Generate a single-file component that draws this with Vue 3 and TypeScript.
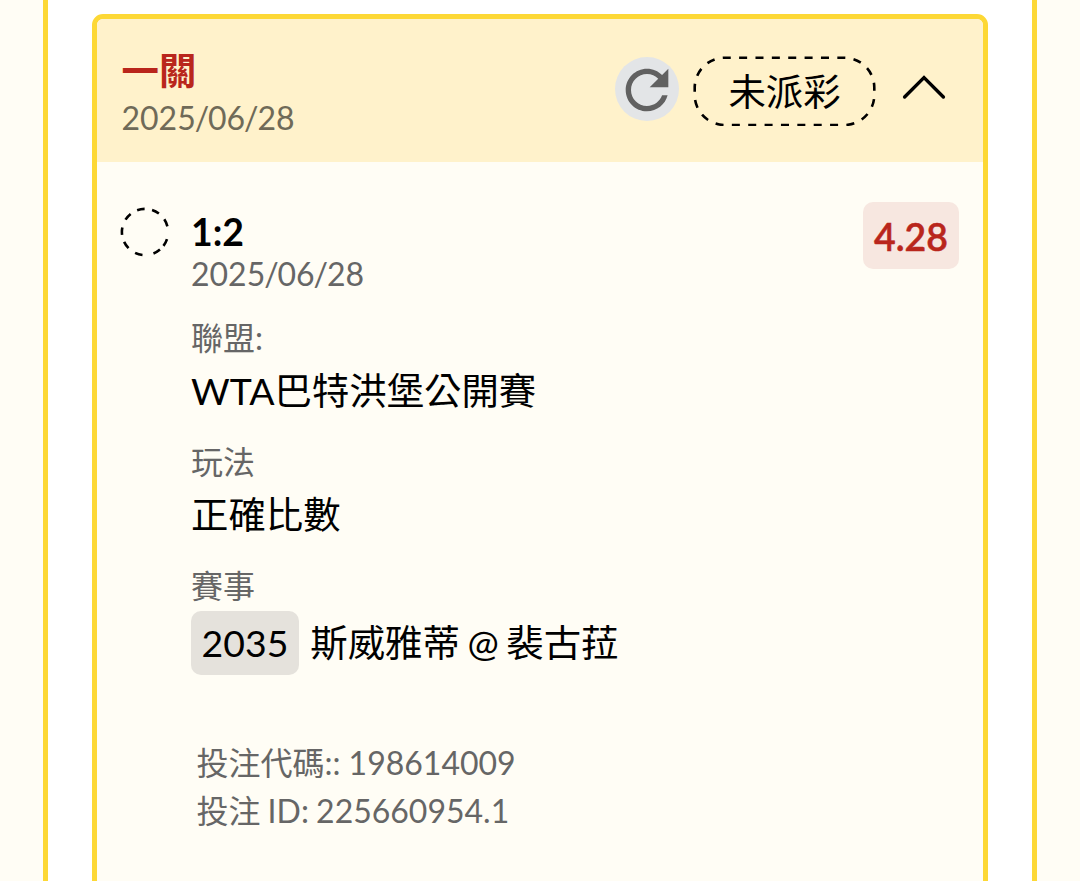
<script setup lang="ts">
interface Detail {
  label: string
  value: string
  code?: string
}

const title = '一關'
const dateParts: string[] = ['2025', '/', '06', '/', '28']
const status = '未派彩'
const pick = '1:2'
const odds = '4.28'

const details: Detail[] = [
  { label: '聯盟:', value: 'WTA巴特洪堡公開賽' },
  { label: '玩法', value: '正確比數' },
  { label: '賽事', value: '斯威雅蒂 @ 裴古菈', code: '2035' },
]

const references: string[] = ['投注代碼:: 198614009', '投注 ID: 225660954.1']
</script>

<template>
  <main class="page">
    <section class="panel">
      <article class="card">
        <header class="head">
          <div class="head-text">
            <h2 class="title">{{ title }}</h2>
            <p class="date">
              <span v-for="(part, i) in dateParts" :key="i" :class="{ slash: part === '/' }">{{ part }}</span>
            </p>
          </div>
          <button class="refresh" type="button">
            <svg viewBox="0 0 24 24" width="64" height="64">
              <path
                d="M17.65 6.35C16.2 4.9 14.21 4 12 4c-4.42 0-7.99 3.58-7.99 8s3.57 8 7.99 8c3.73 0 6.84-2.55 7.73-6h-2.08c-.82 2.33-3.04 4-5.65 4-3.31 0-6-2.69-6-6s2.69-6 6-6c1.66 0 3.14.69 4.22 1.78L13 11h7V4z"
              />
            </svg>
          </button>
          <div class="status">
            <svg class="outline" width="183" height="70" viewBox="0 0 183 70">
              <rect x="1.7" y="1.7" width="179.6" height="67.3" rx="30" pathLength="270" />
            </svg>
            <span>{{ status }}</span>
          </div>
          <svg class="chevron" width="44" height="28" viewBox="0 0 44 28">
            <path d="M2.6 24 22 4.6 41.4 24" />
          </svg>
        </header>

        <div class="body">
          <svg class="pending" width="50" height="50" viewBox="0 0 50 50">
            <circle cx="25" cy="25" r="23.1" pathLength="360" />
          </svg>
          <div class="info">
            <h3 class="pick">{{ pick }}</h3>
            <p class="date">
              <span v-for="(part, i) in dateParts" :key="i" :class="{ slash: part === '/' }">{{ part }}</span>
            </p>
            <dl class="details">
              <div v-for="item in details" :key="item.label" class="detail">
                <dt>{{ item.label }}</dt>
                <dd :class="{ coded: item.code }">
                  <span v-if="item.code" class="code">{{ item.code }}</span>
                  <span>{{ item.value }}</span>
                </dd>
              </div>
            </dl>
            <div class="references">
              <p v-for="line in references" :key="line">{{ line }}</p>
            </div>
          </div>
          <span class="odds">{{ odds }}</span>
        </div>
      </article>
    </section>
  </main>
</template>

<style>
body {
  margin: 0;
  background: #fffdf5;
}
</style>

<style scoped>
.page {
  box-sizing: border-box;
  height: 881px;
  overflow: hidden;
  padding: 0 43px;
  background: #fffdf5;
  color: #000;
  font-family: Lato, "Noto Sans CJK TC", sans-serif;
  font-size: 37.4px;
  line-height: 44px;
}

h2,
h3,
p,
dl,
dd {
  margin: 0;
  font-size: inherit;
}

.panel {
  box-sizing: border-box;
  height: 920px;
  padding: 14px 44px 0;
  background: #fff;
  border: solid #fdd835;
  border-width: 0 5px;
}

.card {
  box-sizing: border-box;
  height: 920px;
  overflow: hidden;
  border: 5px solid #fdd835;
  border-radius: 11px;
  background: #fffdf5;
}

.head {
  box-sizing: border-box;
  display: flex;
  align-items: flex-start;
  height: 143px;
  padding: 30px 37px 0 24.5px;
  background: #fff2cb;
}

.head-text {
  flex: 1;
}

.title {
  color: #b9261c;
  font-weight: 700;
}

.date {
  color: #666;
  font-size: 32px;
  line-height: 38px;
}

.slash {
  margin: 0 -1.1px;
}

.head .date {
  margin-top: 6px;
  color: #6f6a58;
}

.refresh {
  width: 64px;
  height: 64px;
  margin: 8px 14px 0 0;
  padding: 0;
  border: 0;
  border-radius: 50%;
  background: #e3e5e7;
}

.refresh svg {
  display: block;
  fill: #616161;
  transform: translateY(1px);
}

.status {
  position: relative;
  width: 183px;
  height: 70px;
  margin: 7px 26px 0 0;
  line-height: 71px;
  text-align: center;
}

.outline {
  position: absolute;
  inset: 0;
}

.outline rect {
  fill: none;
  stroke: #000;
  stroke-width: 2.6;
  stroke-dasharray: 4.9 5.1;
  stroke-dashoffset: 1.2;
}

.chevron {
  margin-top: 24px;
}

.chevron path {
  fill: none;
  stroke: #000;
  stroke-width: 3.4;
  stroke-linecap: round;
}

.body {
  display: flex;
  align-items: flex-start;
  padding: 40px 24px 0 23px;
}

.pending {
  flex: none;
  margin-top: 5px;
}

.pending circle {
  fill: none;
  stroke: #000;
  stroke-width: 2.6;
  stroke-dasharray: 0 18 19 12.5 19 28 19 20 19 18 19 21 19 18.5 19 19 19 19.5 19 14.5;
}

.info {
  flex: 1;
  margin: 8px 0 0 21px;
}

.pick {
  font-weight: 700;
}

.info .date {
  margin-top: 1px;
}

.detail {
  margin-top: 30px;
}

.detail:first-child {
  margin-top: 26px;
}

.detail dt {
  color: #666;
  font-size: 32px;
  line-height: 38px;
}

.detail dd {
  margin-top: 12px;
  white-space: nowrap;
}

.detail dd.coded {
  display: flex;
  align-items: center;
  gap: 11.4px;
  margin-top: 6px;
  word-spacing: -2px;
}

.code {
  padding: 0 10.6px;
  border-radius: 10px;
  background: #e5e2dc;
  line-height: 64px;
}

.references {
  margin: 64px 0 0 5.4px;
  color: #666;
  font-size: 32px;
  line-height: 48px;
}

.references p:last-child {
  word-spacing: -1px;
}

.odds {
  width: 96px;
  height: 67px;
  border-radius: 10px;
  background: #f7e7e0;
  color: #b9261c;
  font-weight: 600;
  line-height: 70px;
  text-align: center;
  -webkit-text-stroke: 0.5px #b9261c;
}
</style>
